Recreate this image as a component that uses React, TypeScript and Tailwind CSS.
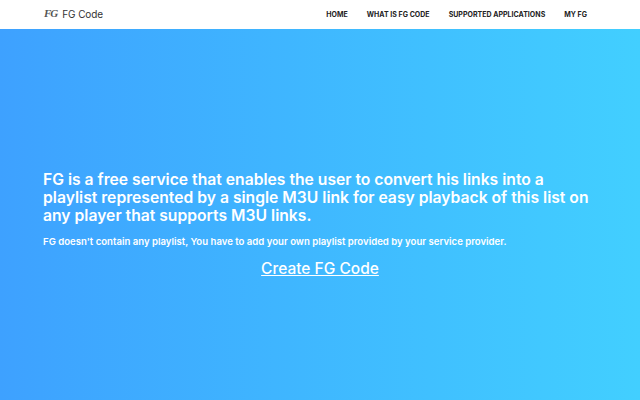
export default function App() {
  return (
    <div className="flex h-[400px] w-[640px] flex-col overflow-hidden font-['Inter','Noto_Sans',sans-serif]">
      {/* Navbar */}
      <nav className="flex h-[29px] shrink-0 items-center justify-between bg-white pl-[44px] pr-[53px]">
        <div className="flex items-center gap-[5px] pb-[2px]">
          <span className="text-[11px] font-bold italic leading-none tracking-[-1px] text-[#555] font-['Liberation_Serif',serif]">FG</span>
          <span className="text-[10px] leading-none tracking-[-0.1px] text-[#333]">FG Code</span>
        </div>
        <ul className="flex items-center gap-[19px] text-[7px] font-bold leading-none tracking-[0.02px] text-[#222]">
          <li>HOME</li>
          <li>WHAT IS FG CODE</li>
          <li>SUPPORTED APPLICATIONS</li>
          <li>MY FG</li>
        </ul>
      </nav>

      {/* Hero */}
      <main className="flex flex-1 flex-col justify-center bg-gradient-to-r from-[#3ea1ff] to-[#42cfff] px-[43px] pt-[21px] text-white">
        <h1 className="w-[548px] text-[15.7px] font-semibold leading-[18px]">
          FG is a free service that enables the user to convert his links into a playlist represented by a single M3U link for easy playback of this list on any player that supports M3U links.
        </h1>
        <p className="mt-[10px] text-[9.6px] font-semibold leading-[13px]">
          FG doesn't contain any playlist, You have to add your own playlist provided by your service provider.
        </p>
        <a className="mt-[11px] text-center text-[15.5px] font-medium leading-[20px] underline">Create FG Code</a>
      </main>
    </div>
  );
}
